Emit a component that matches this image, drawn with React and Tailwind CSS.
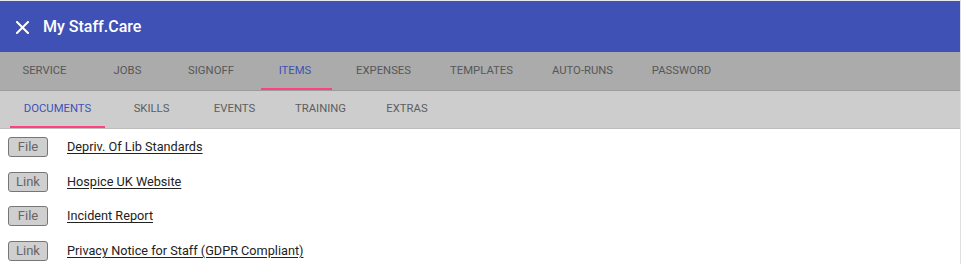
import React from "react";

const mainTabs = [
  ["SERVICE", "w-[83px]"],
  ["JOBS", "w-[83px]"],
  ["SIGNOFF", "w-[84px]"],
  ["ITEMS", "w-[84px]"],
  ["EXPENSES", "w-[93px]"],
  ["TEMPLATES", "w-[103px]"],
  ["AUTO-RUNS", "w-[99px]"],
  ["PASSWORD", "w-[99px]"],
];

const subTabs = [
  ["DOCUMENTS", "w-[95px]"],
  ["SKILLS", "w-[93px]"],
  ["EVENTS", "w-[73px]"],
  ["TRAINING", "w-[99px]"],
  ["EXTRAS", "w-[74px]"],
];

const rows = [
  ["File", "Depriv. Of Lib Standards"],
  ["Link", "Hospice UK Website"],
  ["File", "Incident Report"],
  ["Link", "Privacy Notice for Staff (GDPR Compliant)"],
];

export default function App() {
  return (
    <div
      className="w-[961px] h-[264px] overflow-hidden bg-white flex"
      style={{ fontFamily: "Roboto, 'Liberation Sans', sans-serif" }}
    >
      <div className="w-[960px] flex flex-col">
        <div className="h-[1px] bg-[#e8e8ee]" />
        <div className="h-[51px] bg-[#3f51b5] flex items-center pl-[16px] text-white">
          <svg width="13" height="13" viewBox="0 0 13 13" className="mt-[1px]">
            <path d="M1 1 L12 12 M12 1 L1 12" stroke="white" strokeWidth="2" strokeLinecap="square" />
          </svg>
          <span className="ml-[14px] text-[16px] font-medium">My Staff.Care</span>
        </div>
        <div className="h-[39px] bg-[#ababab] flex pl-[3px] border-b border-[#9c9c9c]">
          {mainTabs.map(([t, w]) => (
            <div
              key={t}
              className={`${w} relative flex items-center justify-center text-[11.3px] ${
                t === "ITEMS" ? "text-[#3f51b5]" : "text-[#575757]"
              }`}
            >
              {t}
              {t === "ITEMS" && (
                <div className="absolute bottom-0 left-[8px] w-[71px] h-[2px] bg-[#ff4081]" />
              )}
            </div>
          ))}
        </div>
        <div className="h-[38px] bg-[#cdcdcd] flex pl-[10px] border-b border-[#bdbdbd]">
          {subTabs.map(([t, w]) => (
            <div
              key={t}
              className={`${w} relative flex items-center justify-center text-[11.3px] ${
                t === "DOCUMENTS" ? "text-[#3f51b5]" : "text-[#5e5e5e]"
              }`}
            >
              {t}
              {t === "DOCUMENTS" && (
                <div className="absolute bottom-0 left-0 w-full h-[2px] bg-[#ff4081]" />
              )}
            </div>
          ))}
        </div>
        <div className="flex flex-col pt-[8px] gap-[14.5px] pl-[8px]">
          {rows.map(([b, l], i) => (
            <div key={i} className="flex items-center h-[20px]">
              <div className="w-[40px] h-[20px] rounded-[3px] border border-[#767676] bg-[#cfcfcf] text-[#666] text-[13px] flex items-center justify-center">
                {b}
              </div>
              <a className="ml-[19px] text-[12.7px] text-[#222] underline underline-offset-[2px]">{l}</a>
            </div>
          ))}
        </div>
      </div>
      <div className="w-[1px] bg-[#dedede]" />
    </div>
  );
}
